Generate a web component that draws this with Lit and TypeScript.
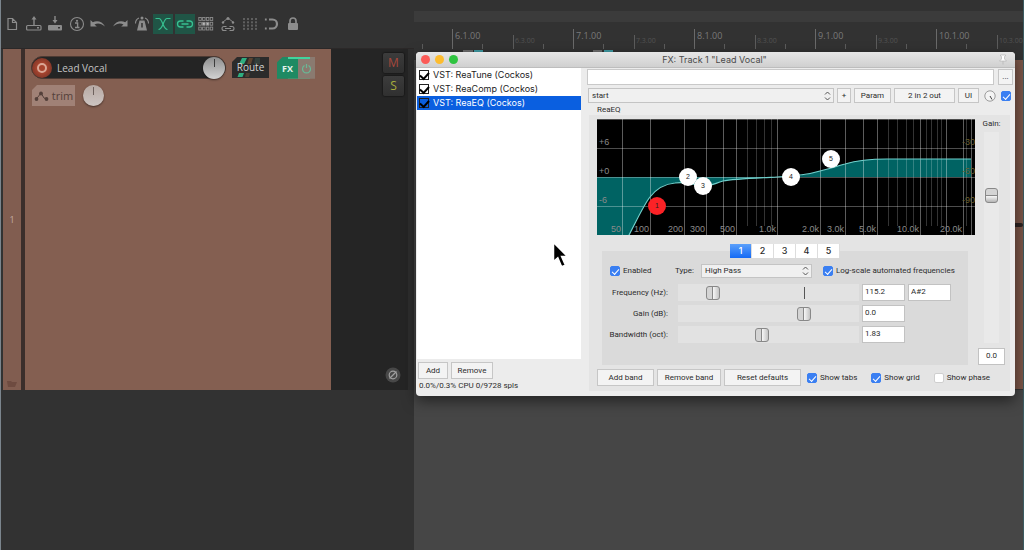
import { LitElement, html, svg, css } from "lit";
import { customElement } from "lit/decorators.js";
import { classMap } from "lit/directives/class-map.js";
import { styleMap } from "lit/directives/style-map.js";

const g = "#8c8c8c";
const lit = "#37c091";

const tools = [
  { name: "New project", icon: svg`<path d="M6 4.500h4.500l4 4v7H6z M10.500 4.500v4h4" fill="none" stroke=${g} stroke-width="1.2"/>` },
  { name: "Open project", icon: svg`<rect x="2.600" y="11.500" width="14.400" height="4.500" rx="1" fill="none" stroke=${g} stroke-width="1.2"/><path d="M10 12V4" stroke=${g} stroke-width="1.4"/><path d="M7.500 5.500L10 2l2.500 3.500z" fill=${g}/><rect x="13" y="13" width="2" height="1.500" fill=${g}/>` },
  { name: "Save project", icon: svg`<rect x="3" y="11" width="14" height="5.500" rx="1" fill=${g}/><path d="M10 2v5" stroke=${g} stroke-width="1.4"/><path d="M7.500 6L10 9.500 12.500 6z" fill=${g}/><rect x="13" y="13" width="2" height="1.500" fill="#333"/>` },
  { name: "Project settings", icon: svg`<circle cx="10" cy="10" r="6.500" fill="none" stroke=${g} stroke-width="1.1"/><circle cx="10" cy="6.800" r="1.100" fill=${g}/><path d="M8 9h2.600v4.200M8 13.500h4.500" fill="none" stroke=${g} stroke-width="1.400"/>` },
  { name: "Undo", icon: svg`<path d="M2.500 6v6.500h6.300L6.500 10.400C9.500 8.700 13 9 17 12.500 14.500 7.500 9 5.800 4.800 8.300z" fill=${g}/>` },
  { name: "Redo", icon: svg`<path d="M17.500 6v6.500h-6.300l2.300-2.100C10.500 8.700 7 9 3 12.500 5.500 7.500 11 5.800 15.200 8.300z" fill=${g}/>` },
  { name: "Metronome", icon: svg`<path d="M7.500 6.500h5L15 16.500H5z" fill=${g}/><path d="M10 9v4.500" stroke="#333" stroke-width="1.500"/><circle cx="10" cy="4" r="1.500" fill=${g}/><path d="M3.500 9.500c0-3 1.500-4.800 3.500-5.600M16.500 9.500c0-3-1.500-4.800-3.500-5.600" fill="none" stroke=${g} stroke-width="1.100"/>` },
  { name: "Auto-crossfade", on: true, icon: svg`<path d="M2.500 4.500h3.500C9.500 4.500 10 15.500 14.500 15.500M17.500 4.500H14C10.500 4.500 10 15.500 5.500 15.500" fill="none" stroke=${lit} stroke-width="1.200"/>` },
  { name: "Item grouping", on: true, icon: svg`<path d="M8.500 7H5.500a3 3 0 0 0 0 6h3M11.500 7h3a3 3 0 0 1 0 6h-3M6.500 10h7" fill="none" stroke=${lit} stroke-width="1.300"/>` },
  { name: "Ripple editing", icon: svg`${[3.5, 8.3, 13.1].map((y) => [2.8, 6.6, 10.4, 14.2].map((x) => svg`<rect x=${x} y=${y} width="2.500" height="2.900" fill=${x > 5 && x < 12 && y === 8.3 ? "#bbb" : "none"} stroke=${g} stroke-width=".9"/>`))}` },
  { name: "Move envelopes", icon: svg`<path d="M4.500 8.500L10 4l5.500 4.500" fill="none" stroke=${g} stroke-width="1"/><circle cx="10" cy="4.500" r="1.500" fill=${g}/><circle cx="5" cy="8.500" r="1.200" fill=${g}/><circle cx="15" cy="8.500" r="1.200" fill=${g}/><path d="M8.500 12.500H6a2 2 0 0 0 0 4h2.500M11.500 12.500H14a2 2 0 0 1 0 4h-2.500M7 14.500h6" fill="none" stroke=${g} stroke-width="1.100"/>` },
  { name: "Grid lines", icon: svg`<path d="M4 4v12M8 4v12M12 4v12M16 4v12" stroke=${g} stroke-width="1" stroke-dasharray="2 1.300"/>` },
  { name: "Snap", icon: svg`<path d="M8 5.500h3.500a4.500 4.500 0 0 1 0 9H8" fill="none" stroke=${g} stroke-width="2.200"/><path d="M4.800 4.500v2M4.800 13.500v2" stroke=${g} stroke-width="1.800"/>` },
  { name: "Lock", icon: svg`<rect x="5" y="9" width="10" height="7" rx="1" fill=${g}/><path d="M7 9V7a3 3 0 0 1 6 0v2" fill="none" stroke=${g} stroke-width="1.700"/>` },
];

const measures = [
  { bar: "6", marks: [{ at: 11, w: 10, c: "#6c6c6c" }, { at: 22, w: 9, c: "#3f9aa3" }] },
  { bar: "7", marks: [{ at: 20, w: 9, c: "#6c6c6c" }, { at: 31, w: 9, c: "#3f9aa3" }] },
  { bar: "8", marks: [] },
  { bar: "9", marks: [] },
  { bar: "10", marks: [] },
];

@customElement("app-root")
export class AppRoot extends LitElement {
  static styles = css`
    :host { display: block; font-family: "Open Sans", "Noto Sans", sans-serif; }
    * { box-sizing: border-box; }
    .screen { display: grid; grid-template-columns: 414px 1fr; min-height: 100vh; background: #323232; overflow: hidden; position: relative; }
    .left { border-left: 1px solid #7b858d; display: flex; flex-direction: column; min-width: 0; }
    .tools { display: flex; justify-content: space-between; width: 302px; height: 48px; padding: 14px 0 14px 1px; }
    .tool { width: 20px; height: 20px; padding: 0; border: 0; background: none; display: block; }
    .tool svg { display: block; }
    .on { background: #205546; }
    .right { display: flex; flex-direction: column; min-width: 0; background: #464646; border-right: 1px solid #3b5b60; }
    .ruler { background: #323232; height: 60px; padding-top: 11px; overflow: hidden; }
    .strip { height: 11px; background: #3b3b3b; }
    .bars { display: flex; margin-top: 7px; }
    .lead { flex: none; width: 38px; display: flex; align-items: flex-end; padding-left: 8px; height: 20px; }
    .bar { flex: none; width: 121px; }
    .bar:last-child { flex: 1; min-width: 0; }
    .ticks { display: grid; grid-template-columns: 30px 31px 30px 30px; align-items: end; height: 20px; }
    .tick { border-left: 1px solid #5c5c5c; height: 5px; padding-left: 1px; white-space: nowrap; }
    .major { height: 20px; font-size: 9px; line-height: 13px; color: #7a7a7a; border-color: #6a6a6a; padding-left: 2px; }
    .minor { height: 14px; font-size: 7px; line-height: 11px; color: #525252; }
    .marks { display: flex; height: 4px; }
    .mark { height: 3px; margin-top: 1px; }
    .item { height: 330px; margin-left: 8px; background: #7b5648; display: flex; justify-content: flex-end; align-items: center; border-bottom: 1px solid #333; }
    .wave { width: 20px; height: 4px; background: #2c2321; border-radius: 2px; }
    .window { position: absolute; left: 416px; top: 52px; width: 599px; }
    .cursor { position: absolute; left: 550px; top: 238px; }
  `;

  render() {
    return html`
      <div class="screen">
        <div class="left">
          <div class="tools">
            ${tools.map((t) => html`<button class=${classMap({ tool: true, on: !!t.on })} aria-label=${t.name}>
              <svg width="20" height="20" viewBox="0 0 20 20">${t.icon}</svg></button>`)}
          </div>
          <track-panel></track-panel>
        </div>
        <div class="right">
          <div class="ruler">
            <div class="strip"></div>
            <div class="bars">
              <div class="lead"><span class="tick"></span></div>
              ${measures.map((m) => html`<div class="bar">
                <div class="ticks">
                  <span class="tick major">${m.bar}.1.00</span><span class="tick"></span>
                  <span class="tick minor">${m.bar}.3.00</span><span class="tick"></span>
                </div>
                <div class="marks">${m.marks.map((k, i) => html`<span class="mark" style=${styleMap({
                  width: k.w + "px",
                  marginLeft: (i ? k.at - m.marks[i - 1].at - m.marks[i - 1].w : k.at) + "px",
                  background: k.c,
                })}></span>`)}</div>
              </div>`)}
            </div>
          </div>
          <div class="item"><span class="wave"></span></div>
        </div>
        <fx-window class="window"></fx-window>
        <svg class="cursor" width="22" height="34" viewBox="0 0 22 34">
          <path d="M3.500 4.500v19l4.300-3.800 3.800 9 3.800-1.600-3.800-8.600h5.800z" fill="#000" stroke="#fff" stroke-width="1.500"/>
        </svg>
      </div>`;
  }
}

@customElement("track-panel")
export class TrackPanel extends LitElement {
  static styles = css`
    :host { display: block; font-family: "Open Sans", "Noto Sans", sans-serif; }
    * { box-sizing: border-box; }
    button { padding: 0; border: 0; font: inherit; display: block; }
    .track { display: grid; grid-template-columns: 18px 4px 1fr 77px 6px; height: 342px; padding-left: 2px; border-top: 1px solid #2b2828; }
    .index { background: #815d50; color: #c3aaa0; font-size: 9px; display: grid; grid-template-rows: 1fr auto; justify-items: center; align-items: center; padding: 8px 0 3px; }
    .split { background: #3b2e2b; }
    .body { background: #845f51; padding: 7px 0 0 6px; }
    .line { display: flex; align-items: center; }
    .line2 { display: flex; align-items: center; margin-top: 6px; gap: 8px; }
    .name { display: flex; align-items: center; width: 195px; height: 23px; border-radius: 12px; background: #242424; border: 1px solid #4d3a33; }
    .title { flex: 1; min-width: 0; border: 0; background: none; color: #c4c4c4; font: 10px "Open Sans", "Noto Sans", sans-serif; padding: 1px 0 0 5px; height: 18px; }
    .rec { width: 20px; height: 20px; border-radius: 50%; background: radial-gradient(circle, #a8442e 35%, #8a3a2a 65%, #5d2d22); display: grid; place-items: center; }
    .ring { width: 10px; height: 10px; border-radius: 50%; border: 2px solid #dba796; }
    .knob { display: flex; justify-content: center; align-items: flex-start; width: 22px; height: 22px; border-radius: 50%; background: linear-gradient(#8e8e8e, #d2d2d2); box-shadow: 0 1px 2px rgba(0, 0, 0, 0.5); padding-top: 2px; }
    .pan { background: linear-gradient(#b7a9a4, #cdc5c2); width: 21px; height: 21px; }
    .needle { display: block; width: 1px; height: 8px; background: #3c3c3c; }
    .pan .needle { background: #6d615d; }
    .route { position: relative; width: 37px; height: 21px; margin-left: 6px; background: #2b2b2b; color: #d4d4d4; font-size: 10px; line-height: 21px; clip-path: polygon(5px 0, 100% 0, 100% 100%, 0 100%, 0 5px); }
    .route svg { position: absolute; left: 0; top: 0; }
    .label { position: relative; }
    .fx { display: flex; width: 38px; height: 22px; margin-left: 8px; clip-path: polygon(6px 0, 100% 0, 100% 100%, 0 100%, 0 6px); background: linear-gradient(90deg, #1f8a63 11px, #42d39d 11px, #42d39d 33px, #8a7a70 33px); padding-top: 2px; }
    .fxon { width: 21px; background: #1f8a63; color: #e4f2ec; font-size: 9px; font-weight: 700; }
    .power { width: 17px; background: #8a7a70; display: grid; place-items: center; }
    .trim { display: flex; align-items: center; justify-content: center; gap: 3px; width: 43px; height: 21px; margin-left: 1px; background: #a08176; color: #54403a; font-size: 11px; clip-path: polygon(5px 0, 100% 0, 100% 100%, 0 100%, 0 5px); }
    .side { background: #252525; display: flex; flex-direction: column; align-items: flex-end; padding: 4px 4px 7px 0; gap: 3px; }
    .ms { width: 21px; height: 20px; background: linear-gradient(#3c3c3c, #303030); border-radius: 2px; box-shadow: 0 0 2px #000; font-size: 12px; line-height: 20px; }
    .mute { color: #a8473b; }
    .solo { color: #a7ad3c; }
    .phase { margin: auto 3px 0 0; background: none; }
    .phase svg { display: block; }
    .edge { background: #2e2e2e; }
  `;

  render() {
    return html`
      <div class="track">
        <div class="index"><span>1</span>
          <svg width="10" height="6" viewBox="0 0 10 6"><path d="M0 0h4l1 1h5L8 6H1z" fill="#6e4b40"/></svg>
        </div>
        <div class="split"></div>
        <div class="body">
          <div class="line">
            <div class="name">
              <button class="rec" aria-label="Record arm"><span class="ring"></span></button>
              <input class="title" aria-label="Track name" value="Lead Vocal">
              <button class="knob" aria-label="Volume"><span class="needle"></span></button>
            </div>
            <button class="route">
              <svg width="37" height="21" viewBox="0 0 37 21"><path d="M10 1h5l-3 6H7zM7 16h5l-1.500 4H5.500z" fill="#2fae80"/><path d="M17 1h4l-2 6h-4z" fill="#5c4430"/><path d="M23 1h5v6h-6z" fill="#34403c"/><path d="M14 16h4l-1 4h-4z" fill="#4d3e31"/></svg>
              <span class="label">Route</span>
            </button>
            <div class="fx">
              <button class="fxon">FX</button>
              <button class="power" aria-label="Bypass effects">
                <svg width="11" height="11" viewBox="0 0 11 11"><path d="M3.500 2.500a4 4 0 1 0 4 0M5.500 1v4" fill="none" stroke="#69b896" stroke-width="1.200"/></svg>
              </button>
            </div>
          </div>
          <div class="line2">
            <button class="trim">
              <svg width="15" height="12" viewBox="0 0 15 12"><path d="M2 9.500L7 3l3 5 3 1.500" fill="none" stroke="#54403a"/><circle cx="2.500" cy="9" r="1.900" fill="#54403a"/><circle cx="7" cy="3.500" r="1.900" fill="#54403a"/><circle cx="12.500" cy="9" r="1.900" fill="#54403a"/></svg>
              trim
            </button>
            <button class="knob pan" aria-label="Pan"><span class="needle"></span></button>
          </div>
        </div>
        <div class="side">
          <button class="ms mute">M</button>
          <button class="ms solo">S</button>
          <button class="phase" aria-label="Phase">
            <svg width="16" height="16" viewBox="0 0 16 16"><circle cx="8" cy="8" r="7.500" fill="#484848"/><circle cx="8" cy="8" r="3.800" fill="none" stroke="#a0a0a0" stroke-width="1.200"/><path d="M4.500 11.500l7-7" stroke="#a0a0a0" stroke-width="1.200"/></svg>
          </button>
        </div>
        <div class="edge"></div>
      </div>`;
  }
}

const plugins = [
  { name: "VST: ReaTune (Cockos)", on: false },
  { name: "VST: ReaComp (Cockos)", on: false },
  { name: "VST: ReaEQ (Cockos)", on: true },
];

const sliders = [
  { id: "freq", label: "Frequency (Hz):", pos: 165, value: "115.2", note: "A#2", mark: true },
  { id: "gain", label: "Gain (dB):", pos: 713, value: "0.0" },
  { id: "band", label: "Bandwidth (oct):", pos: 461, value: "1.83" },
];

const arrows = html`<svg class="arrows" width="7" height="10" viewBox="0 0 7 10"><path d="M1 3.500L3.500 1 6 3.500M1 6.500L3.500 9 6 6.500" fill="none" stroke="#555" stroke-width="1"/></svg>`;

@customElement("fx-window")
export class FxWindow extends LitElement {
  static styles = css`
    :host { display: flex; flex-direction: column; background: #ececec; border-radius: 4px; overflow: hidden; color: #2c2c2c; font: 8px/10px Roboto, "Noto Sans", sans-serif; box-shadow: 0 5px 14px rgba(0, 0, 0, 0.5); }
    * { box-sizing: border-box; }
    button, input, select { font: inherit; color: inherit; margin: 0; border-radius: 0; }
    button { padding: 0; background: #f3f3f3; border: 1px solid #c6c6c6; height: 17px; }
    .head { display: grid; grid-template-columns: 60px 1fr 60px; align-items: center; height: 16px; background: linear-gradient(#e6e6e6, #d0d0d0); border-bottom: 1px solid #bdbdbd; padding: 0 7px 0 5px; text-align: center; font-family: Inter, "Noto Sans", sans-serif; font-size: 9px; color: #4a4a4a; }
    .lights { display: flex; gap: 5px; }
    .light { width: 9px; height: 9px; border-radius: 50%; border: 0; }
    .red { background: #fc5b57; }
    .yellow { background: #fdbc2e; }
    .green { background: #2fc440; }
    .pin { justify-self: end; display: block; }
    .content { display: grid; grid-template-columns: 165px 1fr; }
    .chain { display: flex; flex-direction: column; }
    .list { flex: 1; background: #fff; margin-left: 1px; }
    .plugin { display: flex; align-items: center; height: 14px; padding-left: 2px; gap: 4px; font-family: Inter, "Noto Sans", sans-serif; font-size: 9px; color: #222; }
    .sel { background: #0a5fe0; color: #fff; }
    .listbtns { display: flex; gap: 3px; padding: 3px 2px 0; }
    .add { width: 30px; }
    .remove { width: 42px; }
    .status { padding: 2px 3px 5px; }
    .detail { padding: 1px 2px 5px 6px; min-width: 0; }
    .row1 { display: flex; gap: 4px; }
    .comment { flex: 1; min-width: 0; height: 16px; border: 1px solid #c9c9c9; background: #fff; }
    .dots { width: 15px; height: 16px; }
    .row2 { display: flex; gap: 3px; margin-top: 3px; align-items: center; padding: 0 2px 0 1px; }
    .row2 button { height: 15px; }
    .pick { position: relative; display: flex; align-items: center; min-width: 0; }
    .preset { flex: 1; }
    .pick select { appearance: none; width: 100%; height: 15px; border: 1px solid #c4c4c4; background: #f0f0f0; padding: 0 3px; }
    .arrows { position: absolute; right: 3px; pointer-events: none; }
    .plus { width: 14px; }
    .param { width: 37px; }
    .io { width: 61px; }
    .ui { width: 21px; }
    .wet { display: block; margin: 0 2px; }
    .title { padding: 2px 0 0 10px; line-height: 10px; height: 12px; }
    .check { appearance: none; flex: none; width: 10px; height: 10px; border-radius: 2px; background: #fff; border: 1px solid #cfcfcf; display: grid; place-items: center; }
    .check:checked { background: #3a7ff2; border-color: #3a7ff2; }
    .check:checked::before { content: ""; width: 6px; height: 3px; border: solid #fff; border-width: 0 0 1px 1px; transform: rotate(-48deg); }
    .box, .box:checked { border: 1px solid #222; border-radius: 0; background: transparent; }
    .box:checked::before { width: 7px; height: 4px; border-color: #000; border-width: 0 0 2px 2px; }
    .panel { display: grid; grid-template-columns: 1fr 27px; column-gap: 3px; background: #e4e4e4; margin: 0 3px 0 2px; padding: 4px 5px 5px 8px; }
    .graph { display: block; width: 100%; background: #000; }
    .axis { font: 9px "Liberation Sans", sans-serif; fill: #8a8a8a; }
    .axis2 { font: 9px "Liberation Sans", sans-serif; fill: #6b6130; }
    .node { font: 7px "Liberation Sans", sans-serif; fill: #222; text-anchor: middle; }
    .end { text-anchor: end; }
    .tabs { position: relative; display: flex; justify-content: center; margin: 9px 7px -7px 5px; }
    .tab { width: 22px; height: 14px; background: #fff; border: 0; border-right: 1px solid #ddd; font-family: Inter, "Noto Sans", sans-serif; font-size: 9px; font-weight: 500; }
    .cur { background: linear-gradient(#5ba0fb, #146af5); color: #fff; }
    .bank { background: #dadada; margin: 0 7px 0 5px; padding: 13px 8px 22px 6px; }
    .toprow { display: flex; align-items: center; padding-left: 2px; }
    .opt { display: flex; align-items: center; gap: 3px; white-space: nowrap; }
    .type { margin: 0 7px 0 auto; }
    .typepick { width: 111px; margin-right: 11px; }
    .typepick select { height: 14px; }
    .auto { width: 137px; }
    .sliders { display: grid; grid-template-columns: 60px 188px 43px 43px; column-gap: 3px; row-gap: 4px; margin-top: 6px; }
    .cap { grid-column: 1; text-align: right; line-height: 17px; white-space: nowrap; }
    .slot { display: flex; position: relative; margin-left: 7px; }
    .mark { position: absolute; left: 126px; top: 3px; width: 1px; height: 12px; background: #555; }
    .range { appearance: none; width: 100%; height: 17px; background: #e2e2e2; }
    .range::-webkit-slider-thumb { appearance: none; width: 14px; height: 14px; border: 1px solid #888; border-radius: 3px; background: linear-gradient(90deg, #d4d4d4 45%, #888 45%, #888 53%, #f4f4f4 53%, #c4c4c4); }
    .num { min-width: 0; width: 100%; height: 17px; border: 1px solid #c2c2c2; background: #fff; padding: 0 2px 3px; }
    .side { display: flex; flex-direction: column; align-items: center; }
    .vert { appearance: none; flex: 1; min-height: 0; width: 15px; margin: 3px 0 5px; background: #e9e9e9; writing-mode: vertical-lr; direction: rtl; }
    .vert::-webkit-slider-thumb { appearance: none; width: 13px; height: 15px; border: 1px solid #888; border-radius: 3px; background: linear-gradient(#d4d4d4 45%, #888 45%, #888 53%, #f8f8f8 53%, #b4b4b4); }
    .total { text-align: center; }
    .foot { grid-column: 1 / -1; display: flex; align-items: center; gap: 3px; margin-top: 4px; }
    .b1 { width: 57px; }
    .b2 { width: 64px; }
    .b3 { width: 77px; }
    .shows { display: flex; gap: 14px; margin-left: 3px; }
  `;

  graph() {
    const bright = [25, 53, 87, 109, 126, 139, 180, 223, 248, 266, 280, 323, 349, 366, 374];
    const dim = [150, 159, 167, 174, 291, 300, 309, 316, 329, 334, 340, 344, 369];
    const freqs: [number, string][] = [[24, "50"], [52, "100"], [86, "200"], [108, "300"], [138, "500"], [179, "1.0k"], [222, "2.0k"], [247, "3.0k"], [279, "5.0k"], [322, "10.0k"], [365, "20.0k"]];
    const nodes = [[60, 87], [91, 58], [106, 67], [194, 58], [234, 40]];
    const curve = "31 118C38 105 46 87 53 78 60 69 67 65 78 64 90 62 96 66 106 67 116 67 118 64 126 62 136 60 160 59 180 58 200 57 210 56 223 52 236 49 240 47 248 45 258 42 268 40 290 40L374 40";
    return html`<svg class="graph" viewBox="0 0 378 116" role="img" aria-label="EQ curve">
      <path d="M0 58L0 118L${curve}V58z" fill="#006363"/>
      ${bright.map((x) => svg`<rect x=${x} y="0" width="1" height="116" fill="#fff" opacity=".36"/>`)}
      ${dim.map((x) => svg`<rect x=${x} y="0" width="1" height="107" fill="#fff" opacity=".2"/>`)}
      ${[0, 29, 58, 87].map((y) => svg`<rect x="0" y=${y} width="378" height="1" fill="#fff" opacity=".3"/>`)}
      <path d="M${curve}" fill="none" stroke="#6fd0cc" stroke-width="1.200"/>
      ${freqs.map(([x, t]) => svg`<text class="axis end" x=${x} y="113">${t}</text>`)}
      ${["+6", "+0", "-6"].map((t, i) => svg`<text class="axis" x="2" y=${26 + i * 29}>${t}</text>`)}
      ${["-30", "-60", "-90"].map((t, i) => svg`<text class="axis2 end" x="378" y=${26 + i * 29}>${t}</text>`)}
      ${nodes.map(([x, y], i) => svg`<circle cx=${x} cy=${y} r="9" fill=${i ? "#fff" : "#fb2226"}/><text class="node" x=${x} y=${y + 2}>${i + 1}</text>`)}
    </svg>`;
  }

  check(label: string, on = true, auto = false) {
    return html`<label class=${classMap({ opt: true, auto })}><input class="check" type="checkbox" .checked=${on}>${label}</label>`;
  }

  render() {
    return html`
      <div class="head">
        <div class="lights"><button class="light red" aria-label="Close"></button><button class="light yellow" aria-label="Minimize"></button><button class="light green" aria-label="Zoom"></button></div>
        <span>FX: Track 1 "Lead Vocal"</span>
        <svg class="pin" width="10" height="11" viewBox="0 0 10 11"><path d="M2.500 1h5v1l-1 .5v2.500L8.500 7h-7L3.500 5V2.500l-1-.5zM5 7v3.500" fill="#fff" stroke="#b4b4b4" stroke-width=".7"/></svg>
      </div>
      <div class="content">
        <div class="chain">
          <div class="list">
            ${plugins.map((p) => html`<label class=${classMap({ plugin: true, sel: p.on })}><input class="check box" type="checkbox" checked>${p.name}</label>`)}
          </div>
          <div class="listbtns"><button class="add">Add</button><button class="remove">Remove</button></div>
          <div class="status">0.0%/0.3% CPU 0/9728 spls</div>
        </div>
        <div class="detail">
          <div class="row1"><input class="comment" aria-label="Comment"><button class="dots">...</button></div>
          <div class="row2">
            <div class="pick preset"><select aria-label="Preset"><option>start</option></select>${arrows}</div>
            <button class="plus">+</button><button class="param">Param</button><button class="io">2 in 2 out</button><button class="ui">UI</button>
            <svg class="wet" width="12" height="12" viewBox="0 0 12 12"><circle cx="6" cy="6" r="5.200" fill="#f4f4f4" stroke="#888" stroke-width=".8"/><path d="M6 6l2 3.500" stroke="#444"/></svg>
            <input class="check" type="checkbox" aria-label="Effect enabled" checked>
          </div>
          <div class="title">ReaEQ</div>
          <div class="panel">
            <div class="main">
              ${this.graph()}
              <div class="tabs">${[1, 2, 3, 4, 5].map((n) => html`<button class=${classMap({ tab: true, cur: n === 1 })}>${n}</button>`)}</div>
              <div class="bank">
                <div class="toprow">
                  ${this.check("Enabled")}
                  <label class="type" for="type">Type:</label>
                  <div class="pick typepick"><select id="type"><option>High Pass</option></select>${arrows}</div>
                  ${this.check("Log-scale automated frequencies", true, true)}
                </div>
                <div class="sliders">
                  ${sliders.map((s) => html`
                    <label class="cap" for=${s.id}>${s.label}</label>
                    <div class="slot"><input class="range" type="range" id=${s.id} min="0" max="1000" .value=${String(s.pos)}>${s.mark ? html`<span class="mark"></span>` : ""}</div>
                    <input class="num" aria-label=${s.label} value=${s.value}>
                    ${s.note ? html`<input class="num" aria-label="Note" value=${s.note}>` : ""}`)}
                </div>
              </div>
            </div>
            <div class="side">
              <label for="master">Gain:</label>
              <input class="vert" type="range" id="master" min="0" max="1000" value="714">
              <input class="num total" aria-label="Gain value" value="0.0">
            </div>
            <div class="foot">
              <button class="b1">Add band</button><button class="b2">Remove band</button><button class="b3">Reset defaults</button>
              <div class="shows">${this.check("Show tabs")}${this.check("Show grid")}${this.check("Show phase", false)}</div>
            </div>
          </div>
        </div>
      </div>`;
  }
}
